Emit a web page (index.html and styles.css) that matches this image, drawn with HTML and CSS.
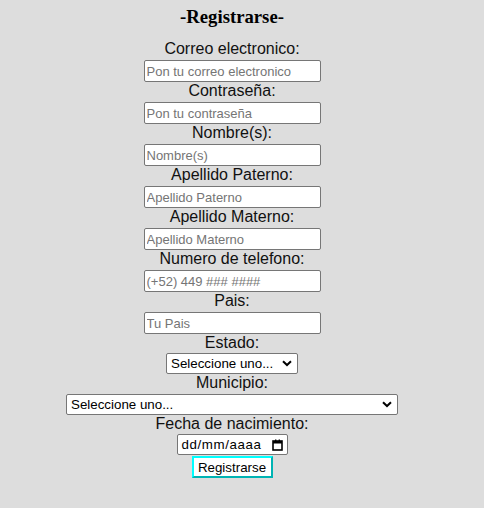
FILE: index.html
```html
<!DOCTYPE html>
<html lang="es">
<head>
<meta charset="utf-8">
<title>Registrarse</title>
<link rel="stylesheet" href="styles.css">
</head>
<body>
<form class="form">
  <h3 class="title">-Registrarse-</h3>
  <label class="lbl" for="correo">Correo electronico:</label>
  <input class="field" id="correo" type="email" placeholder="Pon tu correo electronico">
  <label class="lbl" for="pass">Contraseña:</label>
  <input class="field" id="pass" type="password" placeholder="Pon tu contraseña">
  <label class="lbl" for="nombre">Nombre(s):</label>
  <input class="field" id="nombre" type="text" placeholder="Nombre(s)">
  <label class="lbl" for="pat">Apellido Paterno:</label>
  <input class="field" id="pat" type="text" placeholder="Apellido Paterno">
  <label class="lbl" for="mat">Apellido Materno:</label>
  <input class="field" id="mat" type="text" placeholder="Apellido Materno">
  <label class="lbl" for="tel">Numero de telefono:</label>
  <input class="field" id="tel" type="tel" placeholder="(+52) 449 ### ####">
  <label class="lbl" for="pais">Pais:</label>
  <input class="field" id="pais" type="text" placeholder="Tu Pais">
  <label class="lbl" for="estado">Estado:</label>
  <div class="sel sel-estado" id="estado"><span>Seleccione uno...</span><svg class="chev" width="10" height="7" viewBox="0 0 10 7"><path d="M1 1.2 L5 5 L9 1.2" fill="none" stroke="#000" stroke-width="2"/></svg></div>
  <label class="lbl" for="muni">Municipio:</label>
  <div class="sel sel-muni" id="muni"><span>Seleccione uno...</span><svg class="chev" width="10" height="7" viewBox="0 0 10 7"><path d="M1 1.2 L5 5 L9 1.2" fill="none" stroke="#000" stroke-width="2"/></svg></div>
  <label class="lbl" for="fecha">Fecha de nacimiento:</label>
  <div class="date" id="fecha"><span class="date-text">dd/mm/aaaa</span><svg class="cal" width="11" height="12" viewBox="0 0 11 12"><rect x="1" y="2" width="9" height="9" fill="none" stroke="#000" stroke-width="1.6"/><rect x="1" y="2" width="9" height="2.5" fill="#000"/><rect x="3" y="0.5" width="1.4" height="2" fill="#000"/><rect x="6.6" y="0.5" width="1.4" height="2" fill="#000"/></svg></div>
  <button class="btn" type="submit">Registrarse</button>
</form>
</body>
</html>
```

FILE: styles.css
```css
html, body {
  margin: 0;
  padding: 0;
}
body {
  background: #dddddd;
  font-family: "Liberation Sans", Arial, sans-serif;
  color: #000;
  width: 484px;
  height: 508px;
}
.form {
  display: flex;
  flex-direction: column;
  align-items: center;
  width: 464px;
  padding-top: 6px;
}
.title {
  font-family: "Liberation Serif", "Times New Roman", serif;
  font-weight: bold;
  font-size: 18.72px;
  line-height: 22px;
  margin: 0 0 12px;
}
.lbl {
  font-size: 16px;
  line-height: 18px;
  display: block;
  color: #111;
}
.field {
  box-sizing: border-box;
  width: 177px;
  height: 22px;
  margin: 2px 0 0;
  padding: 1px 2px;
  border: 1px solid #767676;
  border-radius: 2px;
  background: #fff;
  font-family: "Liberation Sans", Arial, sans-serif;
  font-size: 13px;
}
.field::placeholder {
  color: #757575;
}
.sel {
  box-sizing: border-box;
  display: flex;
  align-items: center;
  justify-content: space-between;
  height: 21px;
  margin: 1px 0 0;
  padding: 0 5px 0 4px;
  border: 1px solid #767676;
  border-radius: 2px;
  background: #fff;
  font-size: 13.33px;
}
.sel-estado {
  width: 132px;
}
.sel-muni {
  width: 332px;
  margin-top: 2px;
}
.chev {
  display: block;
}
.date {
  box-sizing: border-box;
  display: flex;
  align-items: center;
  justify-content: space-between;
  width: 111px;
  height: 21px;
  margin-top: 1px;
  padding: 0 4px 0 4px;
  border: 1px solid #767676;
  border-radius: 2px;
  background: #fff;
  font-size: 13.33px;
}
.date-text {
  letter-spacing: 0.6px;
}
.cal {
  display: block;
}
.btn {
  box-sizing: border-box;
  width: 81px;
  height: 22px;
  margin-top: 1px;
  padding: 0;
  border: 2px solid;
  border-color: #00ffff #00b3b3 #00b3b3 #00ffff;
  background: #fff;
  font-family: "Liberation Sans", Arial, sans-serif;
  font-size: 13.33px;
  color: #000;
}
```
